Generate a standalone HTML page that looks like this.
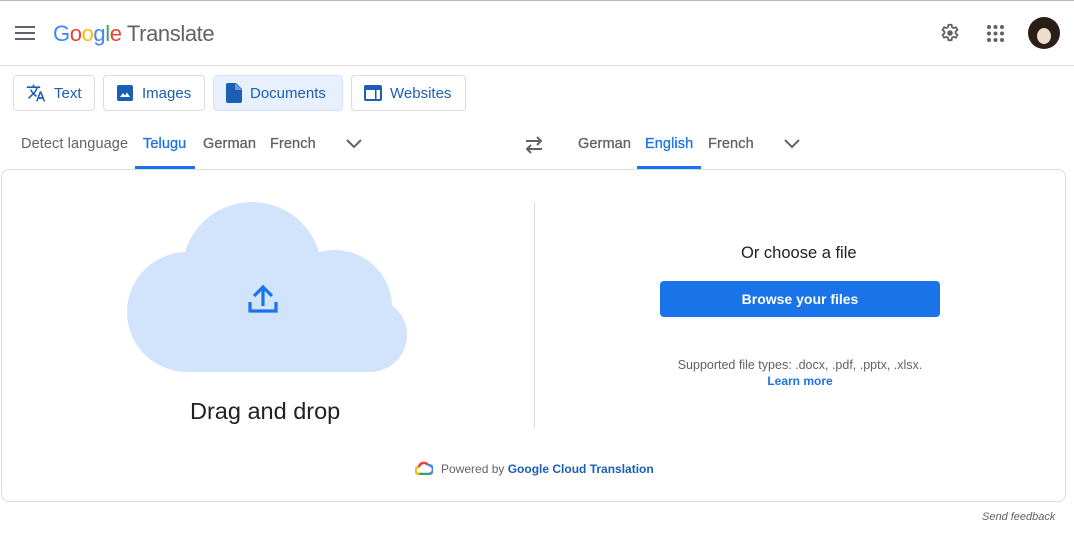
<!DOCTYPE html>
<html><head><style>
*{box-sizing:border-box;margin:0;padding:0}
body{width:1074px;height:550px;background:#fff;font-family:"Liberation Sans",Arial,sans-serif;position:relative;overflow:hidden;color:#3c4043}
.abs{position:absolute}
.btn{position:absolute;top:75px;height:36px;border:1px solid #dadce0;border-radius:4px;display:flex;align-items:center;font-size:15px;color:#1a5fb4;padding-left:12px}
.btn svg{margin-right:8px}
.tab{position:absolute;top:136px;font-size:14.5px;color:#5f6368;letter-spacing:0.1px;-webkit-text-stroke:0.3px currentColor}
</style></head><body>
<div class="abs" style="left:0;top:0;width:1074px;height:1px;background:#bbb"></div>
<div class="abs" style="left:0;top:65px;width:1074px;height:1px;background:#dadce0"></div>
<svg class="abs" style="left:15px;top:26px" width="20" height="14"><rect y="0" width="20" height="2" fill="#5f6368"/><rect y="6" width="20" height="2" fill="#5f6368"/><rect y="12" width="20" height="2" fill="#5f6368"/></svg>
<div class="abs" style="left:53px;top:21px;font-size:22px;letter-spacing:-0.4px"><span style="color:#4285f4">G</span><span style="color:#ea4335">o</span><span style="color:#fbbc05">o</span><span style="color:#4285f4">g</span><span style="color:#34a853">l</span><span style="color:#ea4335">e</span> <span style="color:#5f6368">Translate</span></div>
<svg class="abs" style="left:939px;top:22px" width="22" height="22" viewBox="0 0 24 24"><path fill="none" stroke="#5f6368" stroke-width="2" d="M10.3 3h3.4l.5 2.6 1.7 1 2.5-.9 1.7 3-2 1.7v2l2 1.7-1.7 3-2.5-.9-1.7 1-.5 2.6h-3.4l-.5-2.6-1.7-1-2.5.9-1.7-3 2-1.7v-2l-2-1.7 1.7-3 2.5.9 1.7-1z"/><circle cx="12" cy="12" r="3" fill="#5f6368"/></svg>
<svg class="abs" style="left:987px;top:25px" width="17" height="17"><g fill="#5f6368"><circle cx="2" cy="2" r="2"/><circle cx="8.5" cy="2" r="2"/><circle cx="15" cy="2" r="2"/><circle cx="2" cy="8.5" r="2"/><circle cx="8.5" cy="8.5" r="2"/><circle cx="15" cy="8.5" r="2"/><circle cx="2" cy="15" r="2"/><circle cx="8.5" cy="15" r="2"/><circle cx="15" cy="15" r="2"/></g></svg>
<svg class="abs" style="left:1028px;top:17px" width="32" height="32"><circle cx="16" cy="16" r="16" fill="#2b1d18"/><ellipse cx="16" cy="19" rx="7" ry="8" fill="#eddcd0"/><path d="M7 14 Q16 2 25 14 L25 10 Q16 0 7 10z" fill="#2b1d18"/></svg>

<div class="btn" style="left:13px;width:82px"><svg width="20" height="20" viewBox="0 0 24 24"><path fill="#1a5fb4" d="M12.9 15.1l-2.5-2.5c1.7-1.9 2.9-4.1 3.6-6.5H17V4h-7V2H8v2H1v2h11.2c-.7 1.9-1.7 3.8-3.2 5.4-1-1.1-1.8-2.2-2.4-3.4h-2c.7 1.6 1.7 3.2 3 4.6l-5.1 5 1.4 1.4 5-5 3.1 3.1zM18.5 10h-2L12 22h2l1.1-3h4.8l1.1 3h2zm-2.6 7l1.6-4.3 1.6 4.3z"/></svg>Text</div>
<div class="btn" style="left:103px;width:102px"><svg width="18" height="18" viewBox="0 0 18 18"><rect x="1" y="1" width="16" height="16" rx="2" fill="#1a5fb4"/><path d="M4 13l3-4 2 2.5 2-3 3 4.5z" fill="#fff"/></svg>Images</div>
<div class="btn" style="left:213px;width:130px;background:#e8f0fe;border-color:#d2e3fc"><svg width="16" height="20" viewBox="0 0 16 20"><path d="M2 0h8l6 6v12a2 2 0 0 1-2 2H2a2 2 0 0 1-2-2V2a2 2 0 0 1 2-2z" fill="#1a5fb4"/><path d="M9 0v7h7" fill="#6d9be0"/></svg>Documents</div>
<div class="btn" style="left:351px;width:115px"><svg width="18" height="16" viewBox="0 0 18 16"><rect x="0" y="0" width="18" height="16" rx="2" fill="#1a5fb4"/><rect x="2" y="5" width="9" height="9" fill="#fff"/><rect x="12.5" y="5" width="3.5" height="9" fill="#fff"/></svg>Websites</div>

<div class="tab" style="left:21px;-webkit-text-stroke:0">Detect language</div>
<div class="tab" style="left:143px;color:#1a73e8">Telugu</div>
<div class="abs" style="left:135px;top:166px;width:60px;height:3px;background:#1a73e8"></div>
<div class="tab" style="left:203px">German</div>
<div class="tab" style="left:270px">French</div>
<svg class="abs" style="left:346px;top:139px" width="16" height="10"><path d="M1 1l7 7 7-7" stroke="#5f6368" stroke-width="2" fill="none"/></svg>
<svg class="abs" style="left:524px;top:136px" width="20" height="18" viewBox="0 0 20 18"><path d="M2 5h15M13 1l4 4-4 4M18 13H3M7 9l-4 4 4 4" stroke="#5f6368" stroke-width="2" fill="none"/></svg>
<div class="tab" style="left:578px">German</div>
<div class="tab" style="left:645px;color:#1a73e8">English</div>
<div class="abs" style="left:637px;top:166px;width:64px;height:3px;background:#1a73e8"></div>
<div class="tab" style="left:708px">French</div>
<svg class="abs" style="left:784px;top:139px" width="16" height="10"><path d="M1 1l7 7 7-7" stroke="#5f6368" stroke-width="2" fill="none"/></svg>

<div class="abs" style="left:1px;top:169px;width:1065px;height:333px;border:1px solid #dadce0;border-radius:8px"></div>
<div class="abs" style="left:534px;top:202px;width:1px;height:226px;background:#dadce0"></div>

<svg class="abs" style="left:120px;top:195px" width="295" height="185">
<g fill="#d2e3fc">
<circle cx="132" cy="77" r="70"/>
<circle cx="67" cy="117" r="60"/>
<circle cx="215" cy="112" r="57"/>
<circle cx="250" cy="140" r="37"/>
<rect x="67" y="110" width="183" height="67"/>
</g>
<path d="M143 111v-17M134 101l9-9 9 9M130 107v9h26v-9" stroke="#1a73e8" stroke-width="3.2" fill="none"/>
</svg>
<div class="abs" style="left:190px;top:398px;font-size:23.5px;color:#202124">Drag and drop</div>

<div class="abs" style="left:741px;top:244px;font-size:16.5px;color:#202124">Or choose a file</div>
<div class="abs" style="left:660px;top:281px;width:280px;height:36px;background:#1a73e8;border-radius:4px;color:#fff;font-size:14px;font-weight:bold;text-align:center;line-height:36px">Browse your files</div>
<div class="abs" style="left:600px;top:358px;width:400px;text-align:center;font-size:12.5px;color:#5f6368">Supported file types: .docx, .pdf, .pptx, .xlsx.</div>
<div class="abs" style="left:600px;top:374px;width:400px;text-align:center;font-size:12px;color:#1a73e8;font-weight:bold">Learn more</div>

<svg class="abs" style="left:415px;top:460px" width="18" height="15" viewBox="0 0 18 15"><path d="M4 14a3.5 3.5 0 0 1 0-7" stroke="#fbbc05" stroke-width="2.5" fill="none"/><path d="M4 7a5 5 0 0 1 9-2" stroke="#ea4335" stroke-width="2.5" fill="none"/><path d="M13 5a4.5 4.5 0 0 1 1 9" stroke="#4285f4" stroke-width="2.5" fill="none"/><path d="M4 14h10" stroke="#34a853" stroke-width="2.5"/></svg>
<div class="abs" style="left:441px;top:462px;font-size:12px;color:#5f6368">Powered by <span style="color:#1a5fb4;font-weight:bold">Google Cloud Translation</span></div>
<div class="abs" style="left:982px;top:511px;font-size:11px;color:#5f6368;font-style:italic">Send feedback</div>
</body></html>
